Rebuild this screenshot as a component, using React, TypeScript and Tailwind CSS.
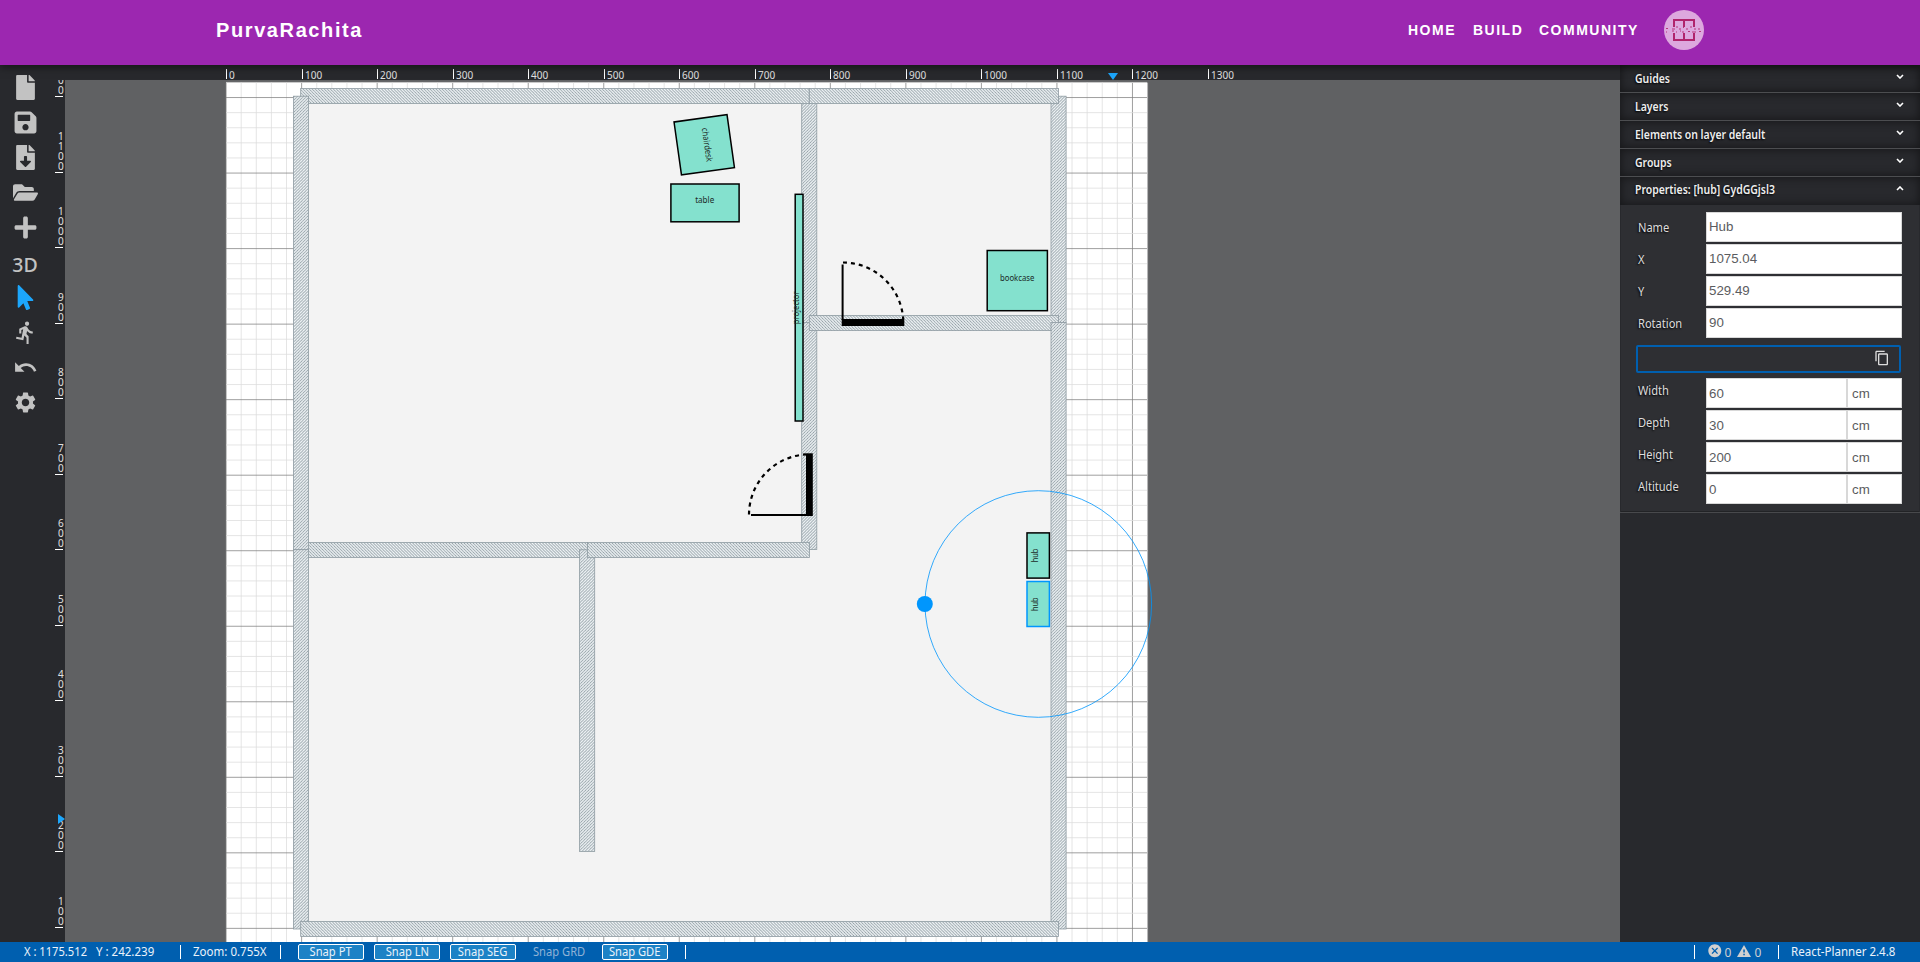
import React from 'react';
import { FaFile, FaSave, FaFileDownload, FaFolderOpen, FaPlus, FaMousePointer } from 'react-icons/fa';
import { MdDirectionsRun, MdUndo, MdSettings, MdContentCopy, MdCancel } from 'react-icons/md';

const UI = "font-['Noto_Sans',sans-serif]";
const SCALE = 0.7553;
const ORIGIN_X = 226.1;
const ORIGIN_Y = 1003.9;
const steps = Array.from({ length: 62 }, (_, i) => i * 20);

function Navbar() {
  return (
    <header className="relative z-10 flex h-[65px] shrink-0 items-start bg-[#9c27b0] pl-[216px] font-['Liberation_Sans',sans-serif] font-bold text-white shadow-[0_2px_8px_rgba(0,0,0,0.5)]">
      <div className="w-[1192px] pt-[15px] text-[20px] leading-[30px] tracking-[1.6px]">PurvaRachita</div>
      <nav className="flex h-[60px] items-center text-[14px] tracking-[1.5px]">
        <a className="w-[65px] pt-px">HOME</a>
        <a className="w-[66px] pt-px">BUILD</a>
        <a className="w-[125px] pt-px">COMMUNITY</a>
        <svg width="40" height="40" viewBox="0 0 40 40">
          <circle cx="20" cy="20" r="20" fill="#dda8de" />
          <path d="M10 17v-7h20v7M20 10v7M10 23v7h20v-7M20 23v7" fill="none" stroke="#b0246c" strokeWidth="2" />
          <path d="M2 18.5h2M8 19h3M12 17h2M15 19h2M19 17.5h1M22 19h2M26 17h2M30 19h2M34 19h2" stroke="#b9357c" strokeWidth="1" />
          <path d="M2 22h1M8 21h2M12 22h1M16 21h1M18 22h2M24 21.5h2M28 22h4M35 21.5h2" stroke="#b9357c" strokeWidth="1" />
        </svg>
      </nav>
    </header>
  );
}

function Toolbar() {
  const cell = 'flex h-[35px] w-full items-center justify-center';
  return (
    <aside className="flex w-[50px] shrink-0 flex-col bg-[#28292d] pt-[5px] text-[25px] text-[#c2c2c2]">
      <div className={cell}><FaFile /></div>
      <div className={cell}><FaSave /></div>
      <div className={cell}><FaFileDownload /></div>
      <div className={cell}><FaFolderOpen /></div>
      <div className={cell}><FaPlus /></div>
      <div className={`${cell} ${UI} pt-[5px] text-[19.5px] font-medium`}>3D</div>
      <div className={`${cell} text-[#1ca6fc]`}><FaMousePointer /></div>
      <div className={cell}><MdDirectionsRun /></div>
      <div className={cell}><MdUndo /></div>
      <div className={cell}><MdSettings /></div>
    </aside>
  );
}

function TopRuler() {
  return (
    <svg className="block shrink-0 overflow-visible bg-[#28292d]" width="1555" height="15" viewBox="65 65 1555 15">
      {Array.from({ length: 14 }, (_, i) => {
        const x = Math.round(226 + i * 75.5);
        return (
          <g key={i}>
            <rect x={x} y="69" width="1" height="10" fill="#fff" />
            <text x={x + 3} y="79" fontSize="10" fill="#e0e0e0" fontFamily="Noto Sans, sans-serif">{i * 100}</text>
          </g>
        );
      })}
      <path d="M1108 73h10l-5 7z" fill="#1ca6fc" />
    </svg>
  );
}

function LeftRuler() {
  return (
    <svg className="block shrink-0 bg-[#28292d]" width="15" height="862" viewBox="50 80 15 862">
      {Array.from({ length: 12 }, (_, i) => {
        const v = (i + 1) * 100;
        const y = Math.floor(927.4 - i * 75.5);
        const digits = String(v).split('');
        return (
          <g key={v}>
            <rect x="55" y={y} width="8" height="1" fill="#fff" />
            {digits.map((d, k) => (
              <text key={k} x="58" y={y - 2 - (digits.length - 1 - k) * 10} fontSize="10" fill="#e0e0e0" fontFamily="Noto Sans, sans-serif">{d}</text>
            ))}
          </g>
        );
      })}
      <path d="M58 814v10l7-5z" fill="#1ca6fc" />
    </svg>
  );
}

type Box = { x: number; y: number; w: number; h: number };

function Wall({ x, y, w, h }: Box) {
  return <rect x={x} y={y} width={w} height={h} fill={w > h ? 'url(#hatchH)' : 'url(#hatchV)'} stroke="#8e9ba2" strokeWidth="0.8" />;
}

function Item({ x, y, w, h, label, lx, ly, rotate = 0, len, stroke = '#000' }: Box & { label: string; lx: number; ly: number; rotate?: number; len: number; stroke?: string }) {
  return (
    <g>
      <rect x={x} y={y} width={w} height={h} fill="#84e1ce" stroke={stroke} strokeWidth="1.5" />
      <text transform={`translate(${lx} ${ly}) rotate(${rotate})`} textAnchor="middle" textLength={len} lengthAdjust="spacingAndGlyphs" fontSize="9" fill="#1c2b28" fontFamily="Noto Sans, sans-serif">{label}</text>
    </g>
  );
}

function Plan() {
  const major = '#808080';
  const minor = '#dddddd';
  return (
    <svg className="block shrink-0 bg-[#606163]" width="1555" height="862" viewBox="65 80 1555 862">
      <defs>
        <pattern id="hatchH" patternUnits="userSpaceOnUse" width="4" height="4" patternTransform="translate(301 96) scale(0.7553 -0.7553)">
          <rect width="4" height="4" fill="#f4f8fa" />
          <path d="M-1,1 l2,-2 M0,4 l4,-4 M3,5 l2,-2" stroke="#8e9ba2" strokeWidth="1.15" />
        </pattern>
        <pattern id="hatchV" patternUnits="userSpaceOnUse" width="4" height="4" patternTransform="translate(301 96) scale(0.7553)">
          <rect width="4" height="4" fill="#f4f8fa" />
          <path d="M-1,1 l2,-2 M0,4 l4,-4 M3,5 l2,-2" stroke="#8e9ba2" strokeWidth="1.15" />
        </pattern>
      </defs>
      <rect x="226" y="82.6" width="921" height="922" fill="#fff" />
      <g strokeWidth={SCALE}>
        {steps.map((v) => (
          <line key={`v${v}`} x1={ORIGIN_X + v * SCALE} x2={ORIGIN_X + v * SCALE} y1="82.6" y2="1004" stroke={v % 100 ? minor : major} />
        ))}
        {steps.map((v) => (
          <line key={`h${v}`} x1="226" x2="1147" y1={ORIGIN_Y - v * SCALE} y2={ORIGIN_Y - v * SCALE} stroke={v % 100 ? minor : major} />
        ))}
      </g>
      <rect x="301" y="96" width="757" height="833" fill="#f3f3f3" />

      <Wall x={1051} y={96.2} w={15.1} h={226.6} />
      <Wall x={801.7} y={96.2} w={15.1} h={453.4} />
      <Wall x={300.7} y={88.5} w={508.6} h={15.1} />
      <Wall x={809.3} y={88.5} w={249.2} h={15.1} />
      <line x1="801.7" x2="816.8" y1="322.5" y2="322.5" stroke="#8e9ba2" strokeWidth="0.8" />
      <Wall x={809.3} y={315.4} w={249.2} h={15.1} />
      <Wall x={1051} y={322.6} w={15.1} h={606.4} />
      <Wall x={301} y={542.4} w={286.4} h={15.1} />
      <Wall x={579.6} y={549.8} w={15.1} h={301.6} />
      <Wall x={587.4} y={542.4} w={222} h={15.1} />
      <Wall x={293.5} y={96.2} w={15.1} h={453.5} />
      <Wall x={293.5} y={549.7} w={15.1} h={379.3} />
      <Wall x={300.7} y={921.4} w={757.8} h={15.1} />

      <rect x="841.7" y="319" width="62.6" height="7" />
      <path d="M842.6 264.5V320" stroke="#000" strokeWidth="2" />
      <path d="M843 262.5A60.5 60.5 0 0 1 903.2 319" fill="none" stroke="#000" strokeWidth="2.2" strokeDasharray="4 4" />
      <rect x="806" y="453.3" width="6.8" height="62.7" />
      <path d="M751 514.9H807" stroke="#000" strokeWidth="2" />
      <path d="M749 514.5A60.5 60.5 0 0 1 806 454.4" fill="none" stroke="#000" strokeWidth="2.2" strokeDasharray="4 4" />

      <g transform="rotate(-8 704.3 144.8)">
        <rect x="677.5" y="118" width="53.5" height="53.5" fill="#84e1ce" stroke="#000" strokeWidth="1.5" />
      </g>
      <text transform="translate(704.2 145.2) rotate(82)" textAnchor="middle" textLength="34" lengthAdjust="spacingAndGlyphs" fontSize="9" fill="#1c2b28" fontFamily="Noto Sans, sans-serif">chairdesk</text>
      <Item x={670.9} y={184} w={68.2} h={37.8} label="table" lx={704.7} ly={203} len={19} />
      <Item x={795.2} y={194.3} w={7.8} h={226.7} label="projector" lx={799.3} ly={307.8} rotate={-90} len={33} />
      <Item x={987.2} y={250.5} w={60.2} h={60.2} label="bookcase" lx={1017.2} ly={281} len={34.5} />
      <Item x={1027} y={532.9} w={22.4} h={45.2} label="hub" lx={1038} ly={555.6} rotate={-90} len={13.5} />
      <Item x={1027} y={581.5} w={22.4} h={45} label="hub" lx={1038} ly={604.2} rotate={-90} len={13.5} stroke="#0096fd" />
      <circle cx="1038.3" cy="604" r="113.3" fill="none" stroke="#0096fd" strokeWidth="0.8" />
      <circle cx="924.8" cy="604" r="8" fill="#0096fd" />
    </svg>
  );
}

function PanelHeader({ title, open = false }: { title: string; open?: boolean }) {
  return (
    <div className={`flex h-[28px] items-center justify-between pl-[15px] pr-[16px] text-[12px] font-semibold text-[#eeeeee] shadow-[inset_0_0_8px_1px_rgba(0,0,0,0.45)] [text-shadow:-1px_1px_2px_#000] ${open ? 'pb-[2px]' : 'border-b border-[#4c4d50]'}`}>
      <span className="origin-left scale-x-[0.87] whitespace-nowrap">{title}</span>
      <svg className="mb-[4px]" width="8" height="5" viewBox="0 0 8 5">
        <path d={open ? 'M1 4l3-3 3 3' : 'M1 1l3 3 3-3'} fill="none" stroke="#fff" strokeWidth="1.6" />
      </svg>
    </div>
  );
}

function Field({ label, value, unit }: { label: string; value: string; unit?: string }) {
  const box = "flex h-[30px] items-center border border-[#d8d8d8] bg-white font-['Liberation_Sans',sans-serif] text-[13.3px] text-[#5b5c60]";
  return (
    <div className="mb-[2px] flex h-[30px]">
      <label className={`w-[70px] pl-[2px] text-[12.3px] text-[#dddddd] [text-shadow:-1px_1px_2px_#000] ${unit ? 'leading-[26px]' : 'leading-[31px]'}`}>
        <span className="inline-block origin-left scale-x-[0.9]">{label}</span>
      </label>
      <div className={`${box} pl-[2px] ${unit ? 'w-[141px] pt-[2px]' : 'w-[196px]'}`}>{value}</div>
      {unit && <div className={`${box} w-[55px] pl-[4px] pt-[2px]`}>{unit}</div>}
    </div>
  );
}

function Sidebar() {
  return (
    <aside className={`flex w-[300px] shrink-0 flex-col bg-[#28292d] ${UI}`}>
      <PanelHeader title="Guides" />
      <PanelHeader title="Layers" />
      <PanelHeader title="Elements on layer default" />
      <PanelHeader title="Groups" />
      <PanelHeader title="Properties: [hub] GydGGjsl3" open />
      <div className="mx-px h-[307px] border-b border-[#222326] bg-[#2e2f33] pl-[15px] pt-[7px]">
        <Field label="Name" value="Hub" />
        <Field label="X" value="1075.04" />
        <Field label="Y" value="529.49" />
        <Field label="Rotation" value="90" />
        <div className="mb-[5px] mt-[7px] flex h-[28px] w-[265px] items-center justify-end rounded-[2px] border-2 border-[#005faf] pb-[2px] pr-[9px] text-[16px] text-[#dddddd]">
          <MdContentCopy />
        </div>
        <Field label="Width" value="60" unit="cm" />
        <Field label="Depth" value="30" unit="cm" />
        <Field label="Height" value="200" unit="cm" />
        <Field label="Altitude" value="0" unit="cm" />
      </div>
      <div className="h-px bg-[#48494c]" />
    </aside>
  );
}

function Snap({ label, off = false }: { label: string; off?: boolean }) {
  return (
    <div className={`mr-[10px] flex h-[16px] w-[66px] items-center justify-center rounded-[2px] border ${off ? 'border-transparent text-[#8fb2d6]' : 'border-white bg-[#1c82c6]'}`}>
      <span className="scale-x-[0.93] whitespace-nowrap leading-none">{label}</span>
    </div>
  );
}

function Divider() {
  return <div className="h-[14px] w-px bg-white" />;
}

function Footer() {
  return (
    <footer className={`flex h-[20px] shrink-0 items-center bg-[#005faf] text-[12px] text-[#eaf2fa] ${UI}`}>
      <div className="w-[73px] pl-[24px]"><span className="inline-block origin-left scale-x-[0.93] whitespace-nowrap">X : 1175.512</span></div>
      <div className="w-[107px] pl-[23px]"><span className="inline-block origin-left scale-x-[0.96] whitespace-nowrap">Y : 242.239</span></div>
      <Divider />
      <div className="w-[99px] pl-[12px]"><span className="inline-block origin-left scale-x-[0.96] whitespace-nowrap">Zoom: 0.755X</span></div>
      <Divider />
      <div className="flex pl-[17px]">
        <Snap label="Snap PT" />
        <Snap label="Snap LN" />
        <Snap label="Snap SEG" />
        <Snap label="Snap GRD" off />
        <Snap label="Snap GDE" />
      </div>
      <div className="ml-[7px]"><Divider /></div>
      <div className="ml-auto flex w-[226px] items-center">
        <Divider />
        <div className="flex w-[83px] items-center pl-[12px] text-[#d0d0d0]">
          <MdCancel className="mb-[3px] size-[15.6px]" />
          <span className="ml-[2px] pt-[2px] leading-none">0</span>
          <svg className="mb-[3px] ml-[6px]" width="14" height="12" viewBox="0 0 14 12">
            <path d="M7 0L14 12H0z" fill="#d0d0d0" />
            <path d="M6.3 4.5h1.5v3H6.3zM6.3 8.8h1.5v1.4H6.3z" fill="#005faf" />
          </svg>
          <span className="ml-[3px] pt-[2px] leading-none">0</span>
        </div>
        <Divider />
        <span className="ml-[12px] origin-left scale-x-[0.96] whitespace-nowrap">React-Planner 2.4.8</span>
      </div>
    </footer>
  );
}

export default function App() {
  return (
    <div className="flex h-[962px] w-[1920px] flex-col overflow-hidden bg-[#28292d]">
      <Navbar />
      <div className="flex h-[877px]">
        <Toolbar />
        <div className="flex w-[1570px] shrink-0 flex-col">
          <div className="flex h-[15px] bg-[#28292d] pl-[15px]"><TopRuler /></div>
          <div className="flex h-[862px]">
            <LeftRuler />
            <Plan />
          </div>
        </div>
        <Sidebar />
      </div>
      <Footer />
    </div>
  );
}
